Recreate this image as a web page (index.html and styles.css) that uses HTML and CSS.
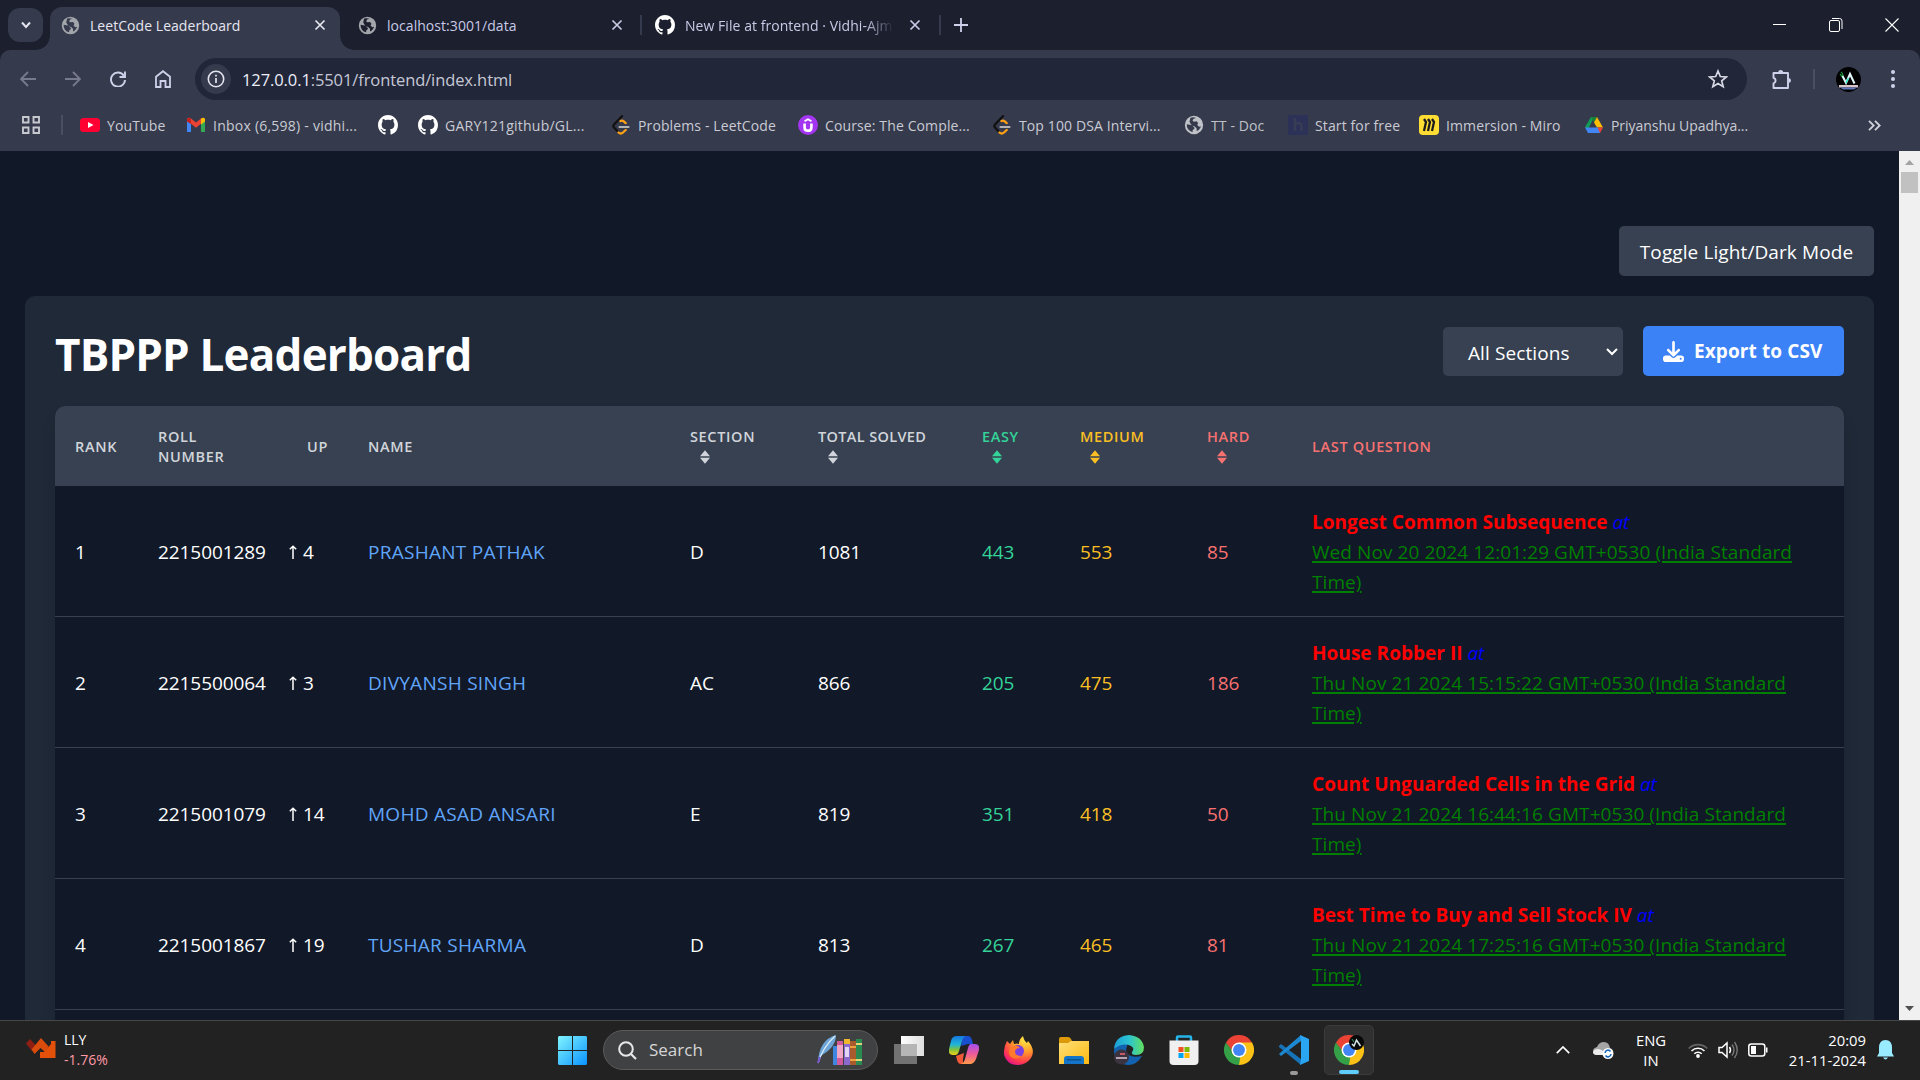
FILE: index.html
```html
<!DOCTYPE html>
<html lang="en">
<head>
<meta charset="utf-8">
<title>LeetCode Leaderboard</title>
<link rel="stylesheet" href="styles.css">
</head>
<body>
<svg class="defs" aria-hidden="true">
  <symbol id="globe" viewBox="0 0 24 24"><path fill="currentColor" fill-rule="evenodd" d="M12 1a11 11 0 1 0 0 22 11 11 0 0 0 0-22zM3.300 11.200 8.800 12c1.700.3 1.900 2.200 3.400 2.700l.3 1.700-2.200 1.900v2.300A8.800 8.800 0 0 1 3.300 11.200zM14.500 3.600l-3 .8-1.300 2.200 1.700 1.400 3.300-.4 1.800 2.300-1.200 2.200 2.400 2 2.100-.6c-.7 2.500-2.500 4.800-5 6l-.2-3.500-2.300-2.200-3.200-1.300-1.900-2.300-1.100-2.400 1.200-4.500A8.800 8.800 0 0 1 14.500 3.600z"/></symbol>
  <symbol id="github" viewBox="0 0 16 16"><path fill="#fff" d="M8 0C3.580 0 0 3.580 0 8c0 3.540 2.290 6.530 5.470 7.590.4.07.55-.17.55-.38 0-.19-.01-.82-.01-1.490-2.010.37-2.530-.49-2.690-.94-.09-.23-.48-.94-.82-1.130-.28-.15-.68-.52-.01-.53.63-.01 1.080.58 1.230.82.72 1.210 1.870.87 2.330.66.07-.52.28-.87.51-1.070-1.780-.2-3.640-.89-3.640-3.950 0-.87.31-1.590.82-2.150-.08-.2-.36-1.020.08-2.120 0 0 .67-.21 2.200.82.64-.18 1.320-.27 2-.27.68 0 1.360.09 2 .27 1.530-1.040 2.200-.82 2.200-.82.44 1.100.16 1.920.08 2.120.51.56.82 1.270.82 2.150 0 3.070-1.870 3.750-3.650 3.950.29.25.54.73.54 1.480 0 1.070-.01 1.930-.01 2.200 0 .21.15.46.55.38A8.013 8.013 0 0 0 16 8c0-4.420-3.580-8-8-8z"/></symbol>
  <symbol id="close" viewBox="0 0 12 12"><path fill="none" stroke="currentColor" stroke-width="1.700" d="M1.500 1.500l9 9m0-9l-9 9"/></symbol>
  <symbol id="leet" viewBox="0 0 20 20"><path fill="none" stroke="#111" stroke-width="2.300" stroke-linecap="round" stroke-linejoin="round" d="M11 1.200 3 9.500q-1.400 1.500 0 3l4 4.300"/><path fill="none" stroke="#ffa116" stroke-width="2.300" stroke-linecap="round" d="M9.500 6q1.700-1 3.200.3l2 1.800M7.500 17.500q2.300 2 4.500 0l2.700-2.500"/><path stroke="#b3b3b3" stroke-width="2.200" stroke-linecap="round" d="M8.500 12h9"/></symbol>
  <symbol id="sort" viewBox="0 0 10 16"><path fill="currentColor" d="M5 1.200 10 7.200H0zM0 8.800h10L5 14.800z"/></symbol>
  <symbol id="arrow" viewBox="0 0 8 14"><path fill="none" stroke="currentColor" stroke-width="1.500" d="M4 14V1.200M.8 4.200 4 1.200l3.200 3"/></symbol>
  <symbol id="chrome" viewBox="0 0 48 48"><path fill="#ea4335" d="M24 24 3.200 12A24 24 0 0 1 44.800 12z"/><path fill="#fbc116" d="M24 24V12h20.800A24 24 0 0 1 24 48z"/><path fill="#34a047" d="M24 24 24 48A24 24 0 0 1 3.200 12l10.400 18z"/><path fill="#ea4335" d="M3.200 12 24 12v6l-10 12z"/><path fill="#fbc116" d="M24 48 34.400 30 30 22l8 4z"/><path fill="#34a047" d="M13.600 30 3.200 12 16 28l10 8-2 12z"/><circle cx="24" cy="24" r="12" fill="#fff"/><circle cx="24" cy="24" r="9.500" fill="#4285f4"/></symbol>
</svg>

<header class="tabs">
  <div class="tab-search"><svg width="12" height="12" viewBox="0 0 12 12"><path d="M2 3.500l4 4.500 4-4.500" fill="none" stroke="#e3e4ee" stroke-width="2"/></svg></div>
  <div class="tab active"><svg class="fav" width="19" height="19"><use href="#globe"/></svg><span class="tab-title">LeetCode Leaderboard</span><svg width="12" height="12"><use href="#close"/></svg></div>
  <div class="tab second"><svg class="fav" width="19" height="19"><use href="#globe"/></svg><span class="tab-title">localhost:3001/data</span><svg width="12" height="12"><use href="#close"/></svg></div>
  <i class="sep"></i>
  <div class="tab third"><svg class="fav" width="20" height="20"><use href="#github"/></svg><span class="tab-title fade">New File at frontend · Vidhi-Ajm</span><svg width="12" height="12"><use href="#close"/></svg></div>
  <i class="sep"></i>
  <svg class="plus" width="14" height="14" viewBox="0 0 14 14"><path d="M7 0v14M0 7h14" stroke="#cfd1ea" stroke-width="1.800"/></svg>
  <div class="window-controls">
    <svg width="14" height="14" viewBox="0 0 14 14"><path d="M0 6.500h13" stroke="#fff"/></svg>
    <svg width="14" height="14" viewBox="0 0 14 14"><rect x=".5" y="2.500" width="10" height="11" rx="1.500" fill="none" stroke="#fff"/><path d="M3 .5h7.500q2.500 0 2.500 2.500v8" fill="none" stroke="#fff"/></svg>
    <svg width="14" height="14" viewBox="0 0 14 14"><path d="M.5.5l13 13m0-13l-13 13" stroke="#fff" stroke-width="1.100"/></svg>
  </div>
</header>

<div class="toolbar">
  <nav class="nav">
    <svg width="16" height="16" viewBox="0 0 16 16"><path d="M16 8H1.500M8 1 1 8l7 7" fill="none" stroke="#777a8d" stroke-width="1.800"/></svg>
    <svg width="16" height="16" viewBox="0 0 16 16"><path d="M0 8h14.500M8 1l7 7-7 7" fill="none" stroke="#777a8d" stroke-width="1.800"/></svg>
    <svg width="16" height="16" viewBox="0 0 16 16"><path d="M13.800 4.600A7 7 0 1 0 15 9M15 .5V6H9.500" fill="none" stroke="#cfd1ea" stroke-width="1.900"/></svg>
    <svg width="16" height="18" viewBox="0 0 16 18"><path d="M1 6.700 8 1.200l7 5.500V17h-4.500v-6h-5v6H1z" fill="none" stroke="#cfd1ea" stroke-width="1.800"/></svg>
  </nav>
  <div class="omnibox">
    <span class="info"><svg width="18" height="18" viewBox="0 0 18 18"><circle cx="9" cy="9" r="7.700" fill="none" stroke="#e3e4ee" stroke-width="1.600"/><path d="M9 8v5M9 4.800v1.700" stroke="#e3e4ee" stroke-width="1.700"/></svg></span>
    <span class="url"><b>127.0.0.1</b>:5501/frontend/index.html</span>
    <svg width="20" height="20" viewBox="0 0 20 20"><path d="M10 2l2.300 5.500 6 .5-4.600 3.900 1.500 5.900L10 14.600l-5.200 3.200 1.500-5.900L1.700 8l6-.5z" fill="none" stroke="#d6d8e4" stroke-width="1.700"/></svg>
  </div>
  <svg class="puzzle" width="21" height="21" viewBox="0 0 21 21"><path d="M2.500 4h5.200H17v5.300V19H2.500v-4.700a2.800 2.800 0 0 0 0-5.400z" fill="none" stroke="#cfd1ea" stroke-width="1.900" stroke-linejoin="round"/><path d="M7.200 3.500a2.500 2.500 0 0 1 5 0zM17.500 9a2.500 2.500 0 0 1 0 5z" fill="#cfd1ea"/></svg>
  <i class="sep"></i>
  <svg class="avatar" width="25" height="25" viewBox="0 0 25 25"><circle cx="12.500" cy="12.500" r="12.500" fill="#000"/><path d="M5 5q2 1 2 4M4 7l5 6" stroke="#1c9a3f" stroke-width="1.200" fill="none"/><path d="M6.500 9l3.500 7 4-9 4.500 9.500" fill="none" stroke="#e8fbff" stroke-width="2"/><path d="M10 16l2.500-5" stroke="#2ee6c0" stroke-width="1.500"/><path d="M3 18h19v2.500H3z" fill="#d5c4ca"/><path d="M4 20.500h17l-3 2H7z" fill="#5d77ba"/></svg>
  <svg class="dots" width="4" height="18" viewBox="0 0 4 18"><g fill="#cfd1ea"><circle cx="2" cy="2" r="2"/><circle cx="2" cy="9" r="2"/><circle cx="2" cy="16" r="2"/></g></svg>
</div>

<div class="bookmarks">
  <svg width="18" height="18" viewBox="0 0 18 18"><path d="M1 1h5.500v5.500H1zM11.500 1H17v5.500h-5.500zM1 11.500h5.500V17H1zM11.500 11.500H17V17h-5.500z" fill="none" stroke="#c7c9cf" stroke-width="1.900"/></svg>
  <i class="sep"></i>
  <a><svg viewBox="0 0 20 20"><rect y="3" width="20" height="14" rx="3.500" fill="#ff0033"/><path d="M8 7l5.500 3L8 13z" fill="#fff"/></svg><span>YouTube</span></a>
  <a><svg viewBox="0 0 20 20"><path d="M1 5v12h4V8z" fill="#4285f4"/><path d="M15 8v9h4V5z" fill="#34a853"/><path d="M1 5.500V4q1.500-2 4-.5l5 4 5-4v5.300l-5 4-5-4z" fill="#ea4335"/><path d="M1 4.500v2L5 9V4Q2 1.500 1 4.500" fill="#c5221f"/><path d="M15 3.500q3-1.500 4 .5v2.500L15 9.500z" fill="#fbbc04"/></svg><span class="wide">Inbox (6,598) - vidhi...</span></a>
  <a><svg><use href="#github"/></svg></a>
  <a><svg><use href="#github"/></svg><span class="wide">GARY121github/GL...</span></a>
  <a><svg><use href="#leet"/></svg><span>Problems - LeetCode</span></a>
  <a><svg viewBox="0 0 20 20"><circle cx="10" cy="10" r="10" fill="#a435f0"/><path d="M6.600 8.500v4q0 3.300 3.400 3.300t3.400-3.300v-4" fill="none" stroke="#fff" stroke-width="2.600"/><path d="M6.500 6.300 10 4.200l3.500 2.100" fill="none" stroke="#fff" stroke-width="1.800"/></svg><span>Course: The Comple...</span></a>
  <a><svg><use href="#leet"/></svg><span>Top 100 DSA Intervi...</span></a>
  <a class="globe"><svg><use href="#globe"/></svg><span>TT - Doc</span></a>
  <a><svg viewBox="0 0 20 20"><path fill="#2c3257" d="M0 0h20v20H0z"/><path d="M7 3v13M7 10q1-2 3.500-2 3 0 3 3v5" fill="none" stroke="#383c55" stroke-width="2.500"/></svg><span>Start for free</span></a>
  <a><svg viewBox="0 0 20 20"><rect width="20" height="20" rx="4" fill="#ffdd33"/><path d="M5 4l2 3-2 9M9 4l2 3-2 9M13 4l2 3-2 9" fill="none" stroke="#1c1c1e" stroke-width="2.300"/></svg><span>Immersion - Miro</span></a>
  <a><svg viewBox="0 0 20 20"><path fill="#0f9d58" d="M7 2h3l-6 12.500-3-2.200z"/><path fill="#188038" d="M7 2h6l-3 5.500z"/><path fill="#fbbc04" d="M13 2l6 10.500h-6L10 7.500z"/><path fill="#4285f4" d="M4 18l-3-5.500h14L16 18z"/><path fill="#ea4335" d="M13.500 12.500H19L16 18z"/></svg><span class="tight">Priyanshu Upadhya...</span></a>
  <svg class="more" width="13" height="11" viewBox="0 0 13 11"><path d="M1 .8l4.700 4.700L1 10.200M7 .8l4.700 4.700L7 10.200" fill="none" stroke="#d0d2da" stroke-width="1.800"/></svg>
</div>

<div class="viewport">
  <main class="page">
    <div class="toggle-row"><button class="toggle">Toggle Light/Dark Mode</button></div>
    <section class="card">
      <div class="card-head">
        <h1>TBPPP Leaderboard</h1>
        <div class="select"><span>All Sections</span><svg width="12" height="8" viewBox="0 0 12 8"><path d="M1 1l5 5 5-5" fill="none" stroke="#fff" stroke-width="2"/></svg></div>
        <button class="export"><svg width="21" height="21" viewBox="0 0 512 512"><path fill="#fff" d="M288 32c0-17.700-14.300-32-32-32s-32 14.300-32 32V274.700l-73.400-73.400c-12.500-12.500-32.800-12.500-45.300 0s-12.500 32.800 0 45.300l128 128c12.500 12.500 32.800 12.500 45.300 0l128-128c12.500-12.500 12.500-32.800 0-45.300s-32.800-12.500-45.300 0L288 274.700V32zM64 352c-35.300 0-64 28.700-64 64v32c0 35.300 28.700 64 64 64H448c35.300 0 64-28.700 64-64V416c0-35.300-28.700-64-64-64H346.500l-45.300 45.300c-25 25-65.500 25-90.500 0L165.500 352H64zm368 56a24 24 0 1 1 0 48 24 24 0 1 1 0-48z"/></svg><span>Export to CSV</span></button>
      </div>
      <div class="table">
        <div class="row head">
          <div><span>Rank</span></div><div>Roll<br>Number</div><div>Up</div><div>Name</div>
          <div><span>Section</span><svg><use href="#sort"/></svg></div>
          <div class="solved"><span>Total Solved</span><svg><use href="#sort"/></svg></div>
          <div class="easy"><span>Easy</span><svg><use href="#sort"/></svg></div>
          <div class="medium"><span>Medium</span><svg><use href="#sort"/></svg></div>
          <div class="hard"><span>Hard</span><svg><use href="#sort"/></svg></div>
          <div class="hard"><span>Last Question</span></div>
        </div>
        <div class="row"><div>1</div><div>2215001289</div><div class="up"><svg><use href="#arrow"/></svg>4</div><div class="name">PRASHANT PATHAK</div><div>D</div><div>1081</div><div class="easy">443</div><div class="medium">553</div><div class="hard">85</div><div class="last"><p><b>Longest Common Subsequence</b> <em>at</em></p><u>Wed Nov 20 2024 12:01:29 GMT+0530 (India Standard</u><br><u>Time)</u></div></div>
        <div class="row"><div>2</div><div>2215500064</div><div class="up"><svg><use href="#arrow"/></svg>3</div><div class="name">DIVYANSH SINGH</div><div>AC</div><div>866</div><div class="easy">205</div><div class="medium">475</div><div class="hard">186</div><div class="last"><p><b>House Robber II</b> <em>at</em></p><u>Thu Nov 21 2024 15:15:22 GMT+0530 (India Standard</u><br><u>Time)</u></div></div>
        <div class="row"><div>3</div><div>2215001079</div><div class="up"><svg><use href="#arrow"/></svg>14</div><div class="name">MOHD ASAD ANSARI</div><div>E</div><div>819</div><div class="easy">351</div><div class="medium">418</div><div class="hard">50</div><div class="last"><p><b>Count Unguarded Cells in the Grid</b> <em>at</em></p><u>Thu Nov 21 2024 16:44:16 GMT+0530 (India Standard</u><br><u>Time)</u></div></div>
        <div class="row"><div>4</div><div>2215001867</div><div class="up"><svg><use href="#arrow"/></svg>19</div><div class="name">TUSHAR SHARMA</div><div>D</div><div>813</div><div class="easy">267</div><div class="medium">465</div><div class="hard">81</div><div class="last"><p><b>Best Time to Buy and Sell Stock IV</b> <em>at</em></p><u>Thu Nov 21 2024 17:25:16 GMT+0530 (India Standard</u><br><u>Time)</u></div></div>
        <div class="row"></div>
      </div>
    </section>
  </main>
  <div class="scrollbar"><svg width="9" height="5" viewBox="0 0 9 5"><path d="M0 5 4.500 0 9 5z" fill="#a3a3a3"/></svg><i></i><svg class="down" width="9" height="5" viewBox="0 0 9 5"><path d="M0 0h9L4.500 5z" fill="#505050"/></svg></div>
</div>

<footer class="taskbar">
  <div class="widget">
    <svg width="30" height="20" viewBox="0 0 30 20"><path d="M0 5.500 4 1l5.500 6L6 13z" fill="#8e1f12"/><path d="M5.500 11.500 15 0l7.500 8.500L19 14l-4.500-4L8.500 16z" fill="#d94c0c"/><path d="M29.500 3v17H14v-6h4l7-8V3z" fill="#e2500a"/></svg>
    <div><span>LLY</span><span class="loss">-1.76%</span></div>
  </div>
  <svg class="start" width="29" height="29" viewBox="0 0 29 29"><defs><linearGradient id="win" gradientUnits="userSpaceOnUse" x1="0" y1="0" x2="29" y2="29"><stop stop-color="#80f4ff"/><stop offset="1" stop-color="#0a93ff"/></linearGradient></defs><path fill="url(#win)" d="M1 0h13v14H0V1zM15 0h13l1 1v13H15zM0 15h14v14H1l-1-1zM15 15h14v13l-1 1H15z"/></svg>
  <div class="search"><svg width="19" height="19" viewBox="0 0 19 19"><circle cx="8" cy="8" r="6.800" fill="none" stroke="#e8e8e8" stroke-width="2"/><path d="M13 13l5 5" stroke="#e8e8e8" stroke-width="2.200"/></svg><span>Search</span>
    <svg class="books" width="46" height="32" viewBox="0 0 46 32"><path d="M1 28Q2 6 19 1q0 12-14 20z" fill="#6ea6d8"/><path d="M1 29Q6 13 18 2" fill="none" stroke="#dcecf8" stroke-width="1.200"/><path d="M1 29l2-6" stroke="#7c54d6" stroke-width="2"/><path d="M16 12h4v19h-4z" fill="#3f86e0"/><path d="M20 7h6v24h-6z" fill="#d05a9c"/><path d="M20 11h6v13h-6z" fill="#f2a6c6"/><path d="M27 5h6v26h-6z" fill="#8b6ad0"/><path d="M27 5h6v5h-6z" fill="#f0b72c"/><path d="M28 13h4v10h-4z" fill="#e4d4f4"/><path d="M33 7h6v24h-6z" fill="#a85b2d"/><path d="M33 12h6v2h-6zM33 25h6v2h-6z" fill="#f0a13f"/><path d="M39 5h6v26h-6z" fill="#2b8a50"/><path d="M39 9h6v2h-6zM39 25h6v2h-6z" fill="#e3d37a"/></svg></div>
  <div class="apps">
    <div><svg width="30" height="28" viewBox="0 0 30 28"><defs><linearGradient id="tv"><stop stop-color="#fff"/><stop offset="1" stop-color="#dedede"/></linearGradient></defs><path d="M0 8h23v20H0z" fill="#727272"/><path d="M7 0h23v20H7z" fill="url(#tv)"/><path d="M7 8h16v12H7z" fill="#b5b5b5"/></svg></div>
    <div><svg width="30" height="28" viewBox="0 0 30 28"><defs><linearGradient id="c1" x2="0" y2="1"><stop stop-color="#1678e0"/><stop offset=".45" stop-color="#20b6d8"/><stop offset=".7" stop-color="#7ac143"/><stop offset="1" stop-color="#f5d018"/></linearGradient><linearGradient id="c2" x2="0" y2="1"><stop stop-color="#a24ff0"/><stop offset=".5" stop-color="#ee5a96"/><stop offset="1" stop-color="#ff9a4a"/></linearGradient></defs><path fill="#184fd0" d="M14 0h5q3 0 4 4l1 4h-5l-7 2z"/><path fill="url(#c1)" d="M8 0h9q-3 1-4 5l-3 10q-1 4-4 4H4q-5 0-4-6L2 5q1-5 6-5z"/><path fill="#f05a38" d="M7 20l8-3-1 6q-1 4 3 5h-5q-3 0-4-4z"/><path fill="url(#c2)" d="M22 8h4q5 0 4 6l-3 9q-2 5-6 5h-9q3-1 4-5l3-11q1-4 3-4z"/></svg></div>
    <div><svg width="29" height="29" viewBox="0 0 29 29"><defs><radialGradient id="ff" cx=".75" cy=".1" r="1"><stop stop-color="#fff04a"/><stop offset=".45" stop-color="#ff9a2a"/><stop offset=".8" stop-color="#ff3c4c"/><stop offset="1" stop-color="#e2138c"/></radialGradient></defs><path fill="url(#ff)" d="M3 5l3 3 3-4 1 4q3-1 5 0 0-5 4-8 1 5 4 7l1-2q8 9 3 17-5 7-13 7Q3 29 0 19 -.5 11 3 5z"/><circle cx="14" cy="15" r="6" fill="#7a3fe0"/><path d="M8 11q5-3 8 1-4 0-5 3 0 5 6 5-6 5-11 0-3-6 2-9z" fill="#ff7a2a"/></svg></div>
    <div><svg width="30" height="27" viewBox="0 0 30 27"><defs><linearGradient id="fo" x2="1" y2="1"><stop stop-color="#ffe07a"/><stop offset="1" stop-color="#fcb90e"/></linearGradient></defs><path fill="#dc9a0a" d="M0 1.500Q0 0 2 0h7q2 0 3 2l1 2v6H0z"/><path fill="url(#fo)" d="M0 6h9l3-2h18v23H0z"/><path fill="#1374c8" d="M5 27v-5q0-3 3-3h14q3 0 3 3v5z"/><path fill="#0b5490" d="M8 22h14v1.500H8z"/></svg></div>
    <div><svg width="30" height="30" viewBox="0 0 30 30"><defs><linearGradient id="ed"><stop stop-color="#1ba0d8"/><stop offset=".5" stop-color="#2cc3d2"/><stop offset="1" stop-color="#62e05c"/></linearGradient></defs><path fill="#1262b0" d="M2 12q5-6 12-5l-2 8q1 9 16 6-5 9-14 9Q0 29 0 15z"/><path fill="url(#ed)" d="M0 14Q1 1 15 0q13 1 15 12 0 8-8 8-5 0-4-3 3-4-1-6-8-4-17 3z"/><circle cx="7.500" cy="22" r="7.500" fill="#3b3440"/><path d="M2 23h11" stroke="#b5a4b0" stroke-width="2"/><path d="M6 19h5" stroke="#c45a6a" stroke-width="2"/></svg></div>
    <div><svg width="30" height="30" viewBox="0 0 30 30"><path d="M8 8V2.500Q8 1.500 9 1.500h12q1 0 1 1V8" fill="none" stroke="#25b4ea" stroke-width="2.500"/><path fill="#f0f0f0" d="M.5 5.500h29V26q0 4-4 4h-21q-4 0-4-4z"/><path fill="#f25022" d="M9.500 12h5v5h-5z"/><path fill="#7fba00" d="M15.500 12h5v5h-5z"/><path fill="#00a4ef" d="M9.500 18h5v5h-5z"/><path fill="#ffb900" d="M15.500 18h5v5h-5z"/></svg></div>
    <div><svg width="30" height="30"><use href="#chrome"/></svg></div>
    <div class="running"><svg width="30" height="30" viewBox="0 0 30 30"><path fill="#1673b8" d="M0 11l2-2 20 15v6L0 12z"/><path fill="#1d88d2" d="M0 19l2 2L22 6V0L1 18z"/><path fill="#2aa5f2" d="M21 0l9 4v22l-9 4 1-6V7z"/></svg></div>
    <div class="current"><svg width="30" height="30" viewBox="0 0 30 30"><use href="#chrome" width="30" height="30"/><circle cx="22.500" cy="7.500" r="7.500" fill="#080808"/><path d="M18 9l2 2 2.500-6 4 6" fill="none" stroke="#d8e8e8" stroke-width="1.500"/><path d="M18 4l2 3" stroke="#28a060"/></svg></div>
  </div>
  <div class="tray">
    <svg class="chev" width="14" height="8" viewBox="0 0 14 8"><path d="M.8 7.200 7 1l6.200 6.200" fill="none" stroke="#fff" stroke-width="1.700"/></svg>
    <svg class="cloud" width="21" height="17" viewBox="0 0 21 17"><path d="M4 13q-4 0-4-4 0-3 4-4 2-5 7-5 5 0 6 6 3 1 3 4l-9 3z" fill="#a5a5a5"/><path d="M4 13q-4 0-4-3 1-3 5-3 5 0 7 6z" fill="#ececec"/><circle cx="15" cy="11.500" r="5.500" fill="#fff"/><path d="M12 11a3 3 0 0 1 5.500-1.500M18 12a3 3 0 0 1-5.500 1.500" fill="none" stroke="#1769c0" stroke-width="1.500"/></svg>
    <div class="lang"><span>ENG</span><span>IN</span></div>
    <svg class="wifi" width="20" height="16" viewBox="0 0 20 16"><g fill="none" stroke-width="1.600"><path d="M.7 6.500a13 13 0 0 1 18.600 0" stroke="#656565"/><path d="M3.500 9a9.200 9.200 0 0 1 13 0M6.300 11.700a5.300 5.300 0 0 1 7.400 0" stroke="#fff"/></g><circle cx="10" cy="14" r="1.900" fill="#fff"/></svg>
    <svg class="vol" width="20" height="18" viewBox="0 0 20 18"><path d="M1 6.500h3l5-4.500v14l-5-4.500H1z" fill="none" stroke="#fff" stroke-width="1.500"/><path d="M11.500 6q2 3 0 6" stroke="#fff" stroke-width="1.500" fill="none"/><path d="M14 3.500q4 5.500 0 11M16.500 1q5.500 8 0 16" stroke="#777" stroke-width="1.400" fill="none"/></svg>
    <svg class="bat" width="20" height="14" viewBox="0 0 20 14"><rect x=".8" y="1" width="16" height="12" rx="2.500" fill="none" stroke="#fff" stroke-width="1.500"/><path d="M3 3h5v8H3z" fill="#fff"/><path d="M18 4.500h1.500v5H18z" fill="#fff"/></svg>
    <div class="clock"><span>20:09</span><span>21-11-2024</span></div>
    <svg class="bell" width="17" height="20" viewBox="0 0 17 20"><path d="M2 8q0-8 6.500-8T15 8v5l2 3.500H0L2 13zM6 17.500h5q-2.500 4-5 0z" fill="#99ebff"/></svg>
  </div>
</footer>
</body>
</html>
```
FILE: styles.css
```css
* { box-sizing: border-box; }
body { margin: 0; width: 1920px; height: 1080px; overflow: hidden; display: flex; flex-direction: column; background: #1b1f2e; font-family: "Open Sans", "Noto Sans", sans-serif; color: #fff; }
svg { display: block; flex: none; }
button { border: 0; color: inherit; font: inherit; letter-spacing: inherit; }
.defs { display: none; }
.sep { width: 2px; height: 20px; background: #4a4e61; flex: none; }

.tabs { height: 50px; flex: none; display: flex; align-items: center; background: #1b1f2e; color: #c8cae6; font-size: 14px; letter-spacing: .05px; }
.tab-search { width: 35px; height: 34px; margin-left: 8px; border-radius: 12px; background: #363a4d; display: grid; place-items: center; }
.tab { display: flex; align-items: center; white-space: nowrap; }
.tab-title { flex: 1; margin-left: 10px; }
.fav { color: #a2a5aa; }
.active { width: 290px; height: 43px; margin: 7px 0 0 7px; padding: 0 14px 7px 11px; border-radius: 12px 12px 0 0; background: #363a4d; color: #e5e6f0; position: relative; }
.active::before, .active::after { content: ""; position: absolute; bottom: 0; width: 14px; height: 14px; }
.active::before { left: -14px; background: radial-gradient(circle at 0 0, transparent 13.5px, #363a4d 14px); }
.active::after { right: -14px; background: radial-gradient(circle at 100% 0, transparent 13.5px, #363a4d 14px); }
.second { width: 300px; padding: 0 17px 0 18px; }
.third { width: 297px; padding: 0 18px 0 13px; }
.tabs > .sep { background: #363a4d; }
.fade { -webkit-mask-image: linear-gradient(90deg, #000 180px, transparent 209px); }
.plus { margin-left: 13px; }
.window-controls { margin-left: auto; margin-right: 21px; display: flex; gap: 42px; }

.toolbar { height: 58px; flex: none; display: flex; align-items: center; padding-right: 25px; background: #363a4d; border-radius: 10px 10px 0 0; }
.nav { display: flex; align-items: center; gap: 29px; margin-left: 20px; width: 175px; }
.omnibox { width: 1552px; height: 42px; border-radius: 21px; background: #212638; display: flex; align-items: center; padding: 0 19px 0 6px; }
.info { width: 30px; height: 30px; border-radius: 50%; background: #363a4d; display: grid; place-items: center; }
.url { flex: 1; margin-left: 11px; font-size: 16.500px; letter-spacing: -.1px; color: #c6c8d6; }
.url b { font-weight: 400; color: #eceef8; }
.puzzle { margin-left: 24px; }
.toolbar .sep { margin-left: 21px; }
.avatar { margin-left: 21px; }
.dots { margin-left: auto; }

.bookmarks { height: 43px; flex: none; display: grid; grid-template-columns: 39px 19px 106px 192px 40px 193px 187px 194px 192px 104px 131px 165px 284px 1fr; align-items: center; padding: 0 0 9px 22px; background: #363a4d; font-size: 14px; letter-spacing: .12px; color: #c9cbd3; }
.bookmarks a { display: flex; align-items: center; gap: 7px; white-space: nowrap; }
.bookmarks a svg { width: 20px; height: 20px; }
.bookmarks .wide { letter-spacing: .24px; }
.bookmarks .tight { letter-spacing: -.05px; }
.globe { color: #bfc2c7; }

.viewport { height: 869px; flex: none; display: flex; background: #111827; }
.page { width: 1899px; padding: 75px 25px 0; overflow: hidden; font-size: 19px; letter-spacing: -.08px; }
.toggle-row { display: flex; justify-content: flex-end; margin-bottom: 20px; }
.toggle { width: 255px; height: 50px; border-radius: 5px; background: #374151; padding: 2px 0 0; letter-spacing: .1px; }
.card { height: 900px; background: #1f2937; border-radius: 10px; padding: 30px; }
.card-head { display: flex; align-items: center; height: 50px; margin-bottom: 30px; }
h1 { margin: 6px auto 0 0; font-size: 44px; line-height: 50px; font-weight: 700; letter-spacing: -.8px; white-space: nowrap; }
.select { width: 180px; height: 49px; margin: 1px 20px 0 0; border-radius: 5px; background: #374151; display: flex; align-items: center; justify-content: space-between; padding: 3px 5px 0 25px; letter-spacing: .1px; }
.select svg { margin-top: -2px; }
.export { width: 201px; height: 50px; border-radius: 5px; background: #3b82f6; display: flex; align-items: center; gap: 10px; padding: 0 0 0 20px; font-weight: 700; font-size: 19px; letter-spacing: .1px; white-space: nowrap; }
.table { height: 800px; border-radius: 10px 10px 0 0; overflow: hidden; background: #111827; box-shadow: 0 12px 19px -4px rgb(0 0 0 / .15); }
.row { height: 131px; display: grid; grid-template-columns: 83px 149px 61px 322px 128px 163px 99px 127px 105px 552px; align-items: center; border-bottom: 1px solid #374151; line-height: 30px; }
.row > div { padding: 2px 0 0 20px; white-space: nowrap; }
.row > .easy { padding-left: 21px; }
.head { height: 80px; border: 0; background: #374151; color: #d1d5db; font-size: 14.500px; font-weight: 600; line-height: 20px; letter-spacing: .65px; text-transform: uppercase; }
.head span { display: block; }
.head .solved { letter-spacing: .35px; }
.head svg { width: 10px; height: 16px; margin: 2px 0 2px 10px; }
.row > .up { padding-left: 2px; display: flex; align-items: center; gap: 6px; }
.up svg { width: 8px; height: 14px; }
.name { color: #60a5fa; letter-spacing: .27px; }
.head .name { letter-spacing: inherit; }
.easy { color: #34d399; }
.medium { color: #fbbf24; }
.hard { color: #f87171; }
.last p { margin: 0; }
.last b { color: #f00; letter-spacing: .03px; }
.last em { color: #00f; }
.last u { color: green; letter-spacing: .08px; text-decoration-thickness: 2px; text-underline-offset: 2px; }

.scrollbar { width: 21px; background: #f0f0f0; display: flex; flex-direction: column; align-items: center; padding: 9px 0; }
.scrollbar i { width: 17px; height: 21px; margin-top: 7px; background: #c1c1c1; }
.down { margin-top: auto; }

.taskbar { height: 60px; flex: none; display: flex; align-items: center; padding-bottom: 1px; background: #222223; border-top: 1px solid #474747; font-size: 14px; line-height: 20px; white-space: nowrap; }
.taskbar span { display: block; }
.widget { display: flex; align-items: center; gap: 8px; width: 532px; margin-left: 26px; }
.widget > div { margin-top: -1px; }
.widget svg { margin-top: -5px; }
.loss { color: #ff99a4; }
.search { width: 275px; height: 40px; margin: 0 3px 0 16px; border: 1px solid #5a5a5b; border-radius: 20px; background: #404143; display: flex; align-items: center; padding: 0 14px; font-size: 17px; color: #d6d6d6; }
.search span { margin-left: 12px; }
.books { margin-left: auto; }
.apps { display: grid; grid-template-columns: repeat(9, 55px); }
.apps div { position: relative; height: 50px; display: grid; place-items: center; }
.apps .current { width: 50px; justify-self: center; border: 1px solid #3b3b3b; border-radius: 5px; background: #303031; }
.running::after, .current::after { content: ""; position: absolute; bottom: 0; width: 8px; height: 4px; border-radius: 2px; background: #999; }
.current::after { width: 20px; background: #60cdff; }
.tray { flex: 1; display: flex; align-items: center; padding-left: 180px; font-size: 14.800px; }
.cloud { margin-left: 23px; }
.lang { width: 40px; margin: -1px 0 0 17px; text-align: center; }
.wifi { margin-left: 17px; }
.vol { margin-left: 10px; }
.bat { margin-left: 10px; }
.clock { width: 80px; margin: -1px 0 0 18px; text-align: right; }
.bell { margin-left: 11px; }
```
